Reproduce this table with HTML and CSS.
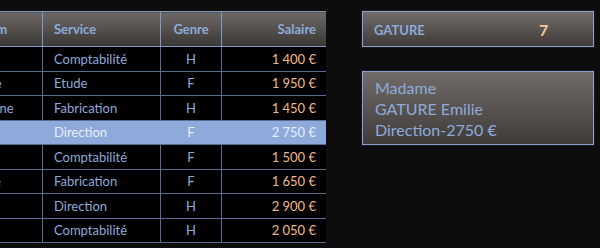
FILE: index.html
```html
<!DOCTYPE html>
<html lang="fr">
<head>
<meta charset="utf-8">
<link rel="stylesheet" href="styles.css">
</head>
<body>
<div class="page">
  <div class="sheet">
    <table class="grid">
      <colgroup>
        <col class="c-name"><col class="c-service"><col class="c-genre"><col class="c-salary">
      </colgroup>
      <thead>
        <tr><th class="left">Prénom</th><th class="left">Service</th><th>Genre</th><th class="right">Salaire</th></tr>
      </thead>
      <tbody>
        <tr><td class="name">Marc</td><td class="svc">Comptabilité</td><td class="gen">H</td><td class="sal">1 400 €</td></tr>
        <tr><td class="name">Claude</td><td class="svc">Etude</td><td class="gen">F</td><td class="sal">1 950 €</td></tr>
        <tr><td class="name">Fabienne</td><td class="svc">Fabrication</td><td class="gen">H</td><td class="sal">1 450 €</td></tr>
        <tr class="sel"><td class="name">Emilie</td><td class="svc">Direction</td><td class="gen">F</td><td class="sal">2 750 €</td></tr>
        <tr><td class="name">Lina</td><td class="svc">Comptabilité</td><td class="gen">F</td><td class="sal">1 500 €</td></tr>
        <tr><td class="name">Sophie</td><td class="svc">Fabrication</td><td class="gen">F</td><td class="sal">1 650 €</td></tr>
        <tr><td class="name">Paul</td><td class="svc">Direction</td><td class="gen">H</td><td class="sal">2 900 €</td></tr>
        <tr><td class="name">Yves</td><td class="svc">Comptabilité</td><td class="gen">H</td><td class="sal">2 050 €</td></tr>
      </tbody>
    </table>
  </div>
  <div class="side">
    <div class="box search">
      <span class="key">GATURE</span>
      <span class="count">7</span>
    </div>
    <div class="box card">
      <div>Madame</div>
      <div>GATURE Emilie</div>
      <div>Direction-2750 €</div>
    </div>
  </div>
</div>
</body>
</html>
```
FILE: styles.css
```css
html, body {
  margin: 0;
  padding: 0;
  background: #0d0d0d;
}
body {
  width: 600px;
  height: 248px;
  overflow: hidden;
  font-family: Lato, "Open Sans", sans-serif;
}
.page {
  display: flex;
  align-items: flex-start;
  height: 248px;
  overflow: hidden;
}
.sheet {
  width: 326px;
  flex: none;
  padding-top: 11px;
  overflow: hidden;
}
.grid {
  margin-left: -50px;
  border-collapse: collapse;
  table-layout: fixed;
  width: 376px;
  font-size: 13px;
}
.c-name { width: 92px; }
.c-service { width: 118px; }
.c-genre { width: 61px; }
.c-salary { width: 105px; }

.grid th {
  height: 34px;
  padding: 0 10px;
  font-weight: 700;
  color: #8eaadb;
  background: linear-gradient(#6e6966, #3a3634);
  border: 1px solid #8299c6;
  text-align: center;
}
.grid th.left { text-align: left; padding-left: 11px; }
.grid th.right { text-align: right; }

.grid td {
  height: 23.5px;
  padding: 0 10px;
  background: #000;
  border: 1px solid #5a6c92;
  color: #8eaadb;
}
.grid td.name, .grid td.svc { text-align: left; padding-left: 11px; }
.grid td.gen { text-align: center; }
.grid td.sal { text-align: right; color: #f2b98c; }

.grid tr.sel td {
  background: #8eaadb;
  color: #e8eef9;
  border-left-color: #8eaadb;
  border-right-color: #8eaadb;
}

.side {
  padding-left: 36px;
  padding-top: 11px;
  display: flex;
  flex-direction: column;
  gap: 24px;
  width: 232px;
  flex: none;
}
.box {
  box-sizing: border-box;
  width: 232px;
  border: 1px solid #8aa2d0;
  background: linear-gradient(#716c6a, #3f3b39);
  box-shadow: 0 0 0 1px #1a1a1a;
}
.search {
  height: 36px;
  display: flex;
  align-items: center;
  padding-left: 11px;
  padding-top: 1px;
}
.key {
  font-weight: 700;
  font-size: 13px;
  color: #8eaadb;
  width: 165px;
}
.count {
  font-weight: 700;
  font-size: 16px;
  color: #f7c49a;
}
.card {
  height: 74px;
  padding: 5px 12px;
  font-size: 16px;
  line-height: 21px;
  color: #8eaadb;
}
```
